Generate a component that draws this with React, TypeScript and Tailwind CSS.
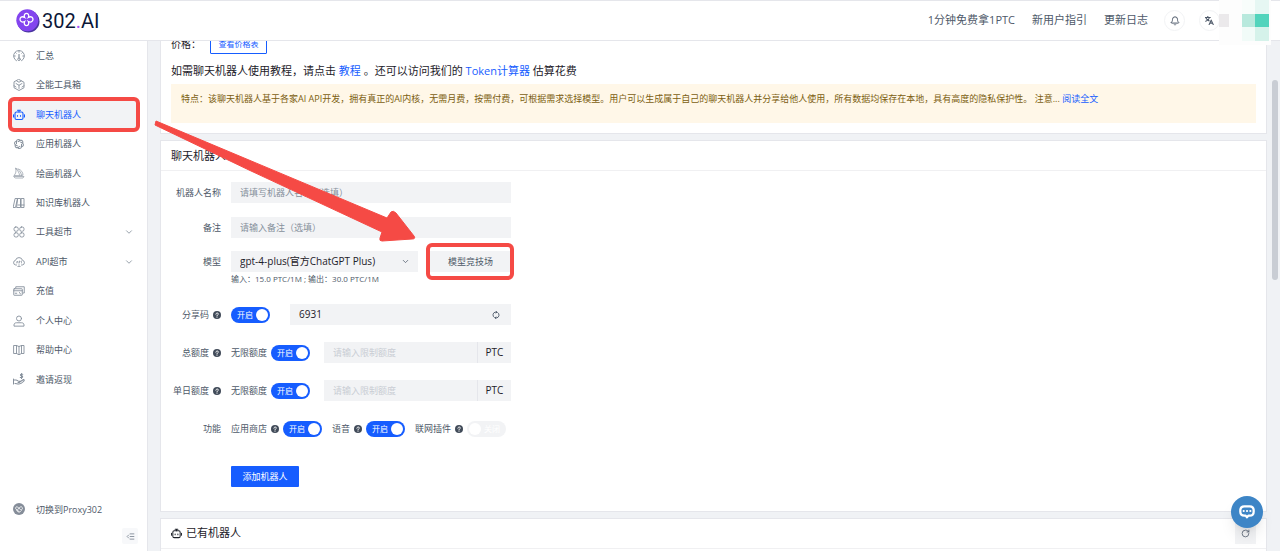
import React, { useState } from "react";
import {
  Bell,
  ChevronDown,
  ListIndentDecrease,
  RotateCw,
} from "lucide-react";
import { RiOpenaiLine } from "react-icons/ri";

type IconProps = { className?: string };

const Svg = ({
  className,
  children,
}: IconProps & { children: React.ReactNode }) => (
  <svg
    className={className}
    viewBox="0 0 24 24"
    fill="none"
    stroke="currentColor"
    strokeWidth="1.8"
    strokeLinecap="round"
    strokeLinejoin="round"
    aria-hidden="true"
  >
    {children}
  </svg>
);

const GaugeIcon = ({ className }: IconProps) => (
  <Svg className={className}>
    <path d="M7 21.500A10.800 10.800 0 1 1 17 21.500" />
    <path d="M12 1.500v3M2 12h2.500M19.500 12H22M5 5l1.500 1.500M19 5l-1.500 1.500" />
    <path d="M12 9v7" strokeWidth="2.500" />
    <circle cx="12" cy="18.500" r="2.600" />
  </Svg>
);

const CubeIcon = ({ className }: IconProps) => (
  <Svg className={className}>
    <path d="M12 1 22 6.500v11L12 23 2 17.500v-11Z" />
    <path d="M6 9l6 3.500L18 9M12 12.500V19M7.500 4l4.500 2.500L16.500 4M2 13.500 6 16M22 13.500 18 16" />
  </Svg>
);

const RobotIcon = ({ className }: IconProps) => (
  <Svg className={className}>
    <g strokeWidth="2.200">
      <rect x="4" y="6" width="16" height="15" rx="3" />
      <path d="M12 6V2.500M9 2.500h6M1 11.500v4.500M23 11.500v4.500" />
      <path d="M9 13v1.500M15 13v1.500" />
    </g>
  </Svg>
);

const SailIcon = ({ className }: IconProps) => (
  <Svg className={className}>
    <g strokeWidth="1.300">
      <path d="M2.500 16.500C6 13 7 8 5 2c7 3 11 8 12 14.500Z" />
      <path d="M11 4c6 2 9 7 9 12.500h-3M6.500 4c4 4 6 8 6.500 12M2 19h20l-2 3H5Z" />
    </g>
  </Svg>
);

const BooksIcon = ({ className }: IconProps) => (
  <Svg className={className}>
    <path d="M5 3h4L5 21H1ZM10 3h5v18H8ZM17 3h5v18h-5ZM10 16h5M17 16h5" />
  </Svg>
);

const CloverIcon = ({ className }: IconProps) => (
  <Svg className={className}>
    <rect x="2" y="2" width="8.500" height="8.500" rx="3.500" />
    <rect x="13.500" y="2" width="8.500" height="8.500" rx="3.500" />
    <rect x="2" y="13.500" width="8.500" height="8.500" rx="3.500" />
    <rect x="13.500" y="13.500" width="8.500" height="8.500" rx="3.500" />
  </Svg>
);

const CloudIcon = ({ className }: IconProps) => (
  <Svg className={className}>
    <path d="M7 18H5.500A4.700 4.700 0 0 1 5 8.700a7.200 7.200 0 0 1 14 0A4.700 4.700 0 0 1 18.500 18H17" />
    <path
      d="m7 14 1.500-4 1.500 4M12.500 14v-4h1.500v2h-1.500M17 10v4M12 17v4M9.500 21h5"
      strokeWidth="1.300"
    />
  </Svg>
);

const CardsIcon = ({ className }: IconProps) => (
  <Svg className={className}>
    <path d="M5.500 6V3.500h17V16H20" />
    <rect x="1.500" y="7.500" width="17" height="13" rx="1" />
    <path d="M1.500 11.500h17M4.500 16.500h3M13 15l2 3" />
  </Svg>
);

const UserIcon = ({ className }: IconProps) => (
  <Svg className={className}>
    <circle cx="12" cy="7" r="5" />
    <path d="M2 21.500V20c0-3 2-4.500 5-4.500h10c3 0 5 1.500 5 4.500v1.500Z" />
  </Svg>
);

const GuideIcon = ({ className }: IconProps) => (
  <Svg className={className}>
    <path d="M2 3h5l5 2 5-2h5v16h-5l-5 2.500L7 19H2ZM12 5v16M7 3v16M17 3v16" />
  </Svg>
);

const RebateIcon = ({ className }: IconProps) => (
  <Svg className={className}>
    <g strokeWidth="2.100">
      <path d="M1 12v10M1 14h5c3 0 3 2.500 6 2.500h3c0 2-2 2.500-5 2.500M15 17l6-4c2 1 2 2 0 4-3 3-5 5-9 5-4 0-5-1-8-1" />
      <path d="M19.500 2.500h-3c-2 0-2 3 0 3h1c2.500 0 2.500 3.500 0 3.500h-3M17 1v10" />
    </g>
  </Svg>
);

const ProxyIcon = ({ className }: IconProps) => (
  <svg className={className} viewBox="0 0 24 24" fill="none" aria-hidden="true">
    <circle cx="12" cy="12" r="12" fill="#858d99" />
    <path
      d="M12 17 6 12.500C3.500 9.500 7 6 9.500 8.500L15 13c2 2 5-1 3.500-4-1.500-2.500-4.500-1.500-5 0L9 13.500M7.500 15.500c3 3.500 6 3.500 9 0"
      stroke="#fff"
      strokeWidth="1.700"
      strokeLinecap="round"
    />
  </svg>
);

const HelpIcon = () => (
  <svg className="size-2 shrink-0" viewBox="0 0 24 24" aria-hidden="true">
    <circle cx="12" cy="12" r="12" fill="#414b59" />
    <path
      d="M8.500 9.500c0-4.500 7.500-4.500 7.500-.5 0 3-4 2.500-4 5.500M12 18.200v.600"
      fill="none"
      stroke="#fff"
      strokeWidth="3"
      strokeLinecap="round"
    />
  </svg>
);

const SyncIcon = ({ className }: IconProps) => (
  <Svg className={className}>
    <g strokeWidth="2.800">
      <path d="M7 19.500A9 9 0 0 1 9 3.500h5M17 4.500a9 9 0 0 1-2 16h-5" />
      <path d="m12 1 3 2.500L12 6M12 23l-3-2.500L12 18" />
    </g>
  </Svg>
);

const TranslateIcon = ({ className }: IconProps) => (
  <Svg className={className}>
    <path
      d="M1 4h13M7.500 1v3M12 4c-1 5-5 8-10 10M3 6c2 4 5 6 8 7M11 23l5.500-12L22 23M13 19h7"
      strokeWidth="3"
    />
  </Svg>
);

const LogoMark = () => (
  <svg className="size-6" viewBox="0 0 24 24" fill="none" aria-hidden="true">
    <circle cx="12.500" cy="12.500" r="11" fill="#4a35a0" />
    <circle cx="11.300" cy="11.200" r="11" fill="#8344ef" />
    <path
      d="M8.500 8.300C6.800 3 14.200 3 12.500 8.300 18.500 5.500 18.500 15 12.500 12.700 14.200 18 6.800 18 8.500 12.700 2.500 15 2.500 5.500 8.500 8.300Z"
      stroke="#fff"
      strokeWidth="1.300"
    />
    <path
      d="m8.500 8.300 1.200 1.200M12.500 8.300l-1.200 1.200M8.500 12.700l1.200-1.200M12.500 12.700l-1.200-1.200"
      stroke="#fff"
    />
  </svg>
);

const menu = [
  { label: "汇总", icon: GaugeIcon },
  { label: "全能工具箱", icon: CubeIcon },
  { label: "聊天机器人", icon: RobotIcon, active: true },
  { label: "应用机器人", icon: RiOpenaiLine },
  { label: "绘画机器人", icon: SailIcon },
  { label: "知识库机器人", icon: BooksIcon },
  { label: "工具超市", icon: CloverIcon, nested: true },
  { label: "API超市", icon: CloudIcon, nested: true },
  { label: "充值", icon: CardsIcon },
  { label: "个人中心", icon: UserIcon },
  { label: "帮助中心", icon: GuideIcon },
  { label: "邀请返现", icon: RebateIcon },
];

const Header = () => (
  <header className="relative flex h-[41px] shrink-0 items-center border-y border-[#e5e6eb] bg-white pl-4 pr-[60px]">
    <a href="#" className="flex items-center gap-[2px]">
      <LogoMark />
      <span className="font-[Roboto,sans-serif] text-[20px] leading-6 text-[#0c1738]">
        302<span className="text-[#a855f7]">.</span>AI
      </span>
    </a>
    <nav className="ml-auto flex items-center gap-[17px] text-[11px] text-[#4e5969]">
      <a href="#">1分钟免费拿1PTC</a>
      <a href="#">新用户指引</a>
      <a href="#">更新日志</a>
    </nav>
    <div className="ml-4 flex gap-[14px] text-[#4e5969]">
      <button
        aria-label="通知"
        className="flex size-[21px] items-center justify-center rounded-full border border-[#f2f3f5]"
      >
        <Bell className="size-[10px]" strokeWidth={2.4} />
      </button>
      <button
        aria-label="语言"
        className="flex size-[21px] items-center justify-center rounded-full border border-[#f2f3f5]"
      >
        <TranslateIcon className="size-[9px]" />
      </button>
    </div>
    <svg
      className="absolute -top-px right-[9px] z-10 h-[45px] w-[52px]"
      viewBox="0 0 52 45"
      shapeRendering="crispEdges"
      aria-hidden="true"
    >
      <path fill="#fdfdfd" d="M0 0h52v45H0z" />
      <path fill="#ebe9eb" d="M0 14h10v13H0z" />
      <path fill="#f8fdfb" d="M23 0h13v14H23z" />
      <path fill="#e6f7f3" d="M36 0h14v14H36z" />
      <path fill="#b8e9dd" d="M23 14h13v13H23z" />
      <path fill="#52d4bc" d="M36 14h14v13H36z" />
      <path fill="#f1fbf8" d="M23 27h13v14H23z" />
      <path fill="#d5f2ea" d="M36 27h14v14H36z" />
    </svg>
  </header>
);

const Sidebar = () => (
  <aside className="flex w-[148px] shrink-0 flex-col border-r border-[#e5e6eb] bg-white text-[9px] text-[#4e5969]">
    <nav className="flex h-[353px] flex-col">
      {menu.map(({ label, icon: Icon, active, nested }) => (
        <div key={label} className="relative flex flex-1 items-center">
          <a
            href="#"
            className={`mx-[9px] flex h-7 flex-1 items-center gap-[11px] px-1 ${
              active ? "bg-[#f2f3f5] text-[#165dff]" : ""
            }`}
          >
            <Icon className={`size-3 ${active ? "" : "text-[#86909c]"}`} />
            {label}
            {nested && (
              <ChevronDown className="ml-auto size-[10px] text-[#86909c]" />
            )}
          </a>
          {active && (
            <span className="pointer-events-none absolute -inset-y-[3px] left-2 right-[7px] rounded-md border-4 border-[#f54a45]" />
          )}
        </div>
      ))}
    </nav>
    <div className="mt-auto flex flex-col pb-[7px]">
      <a href="#" className="flex items-center gap-[11px] px-[13px]">
        <ProxyIcon className="size-3" />
        切换到Proxy302
      </a>
      <button
        aria-label="收起菜单"
        className="ml-auto mr-[9px] mt-3 flex size-4 items-center justify-center rounded-xs bg-[#f7f8fa] text-[#86909c]"
      >
        <ListIndentDecrease className="size-[9px]" strokeWidth={2.5} />
      </button>
    </div>
  </aside>
);

const Toggle = ({
  label,
  defaultOn = true,
}: {
  label: string;
  defaultOn?: boolean;
}) => {
  const [on, setOn] = useState(defaultOn);
  return (
    <label
      className={`relative flex h-4 w-[39px] shrink-0 items-center justify-between rounded-full text-[8px] text-white ${
        on
          ? "bg-[#165dff] pl-[6px] pr-[2px]"
          : "flex-row-reverse bg-[#f2f3f5] pl-[2px] pr-[6px]"
      }`}
    >
      <input
        type="checkbox"
        role="switch"
        aria-label={label}
        className="sr-only"
        checked={on}
        onChange={() => setOn(!on)}
      />
      <span>{on ? "开启" : "关闭"}</span>
      <span className="size-3 rounded-full bg-white" />
    </label>
  );
};

const Row = ({
  label,
  htmlFor,
  help,
  className = "",
  children,
}: {
  label: string;
  htmlFor?: string;
  help?: boolean;
  className?: string;
  children: React.ReactNode;
}) => (
  <div className={`flex h-[21px] items-center ${className}`}>
    <label
      htmlFor={htmlFor}
      className="flex w-[60px] shrink-0 items-center justify-end gap-1 whitespace-nowrap"
    >
      {label}
      {help && <HelpIcon />}
    </label>
    <div className="ml-[10px] flex w-[280px] items-center">{children}</div>
  </div>
);

const QuotaRow = ({ id, label }: { id: string; label: string }) => (
  <Row label={label} htmlFor={id} help className="mt-[17px]">
    <span className="w-[40px] whitespace-nowrap">无限额度</span>
    <Toggle label={`${label}无限额度`} />
    <div className="ml-auto flex h-[21px] w-[187px] bg-[#f2f3f5]">
      <input
        id={id}
        disabled
        placeholder="请输入限制额度"
        className="min-w-0 flex-1 px-[9px] text-[9px] placeholder:text-[#c9cdd4]"
      />
      <span className="flex w-[34px] items-center justify-center border-l border-[#e5e6eb] text-[10px] text-[#1d2129]">
        PTC
      </span>
    </div>
  </Row>
);

const inputClass =
  "h-[21px] w-full bg-[#f2f3f5] px-[9px] text-[9px] text-[#1d2129] placeholder:text-[#86909c]";

const BotForm = () => (
  <form
    className="pb-6 pr-[10px] pt-[11px] text-[9px] text-[#4e5969]"
    onSubmit={(e) => e.preventDefault()}
  >
    <Row label="机器人名称" htmlFor="name">
      <input
        id="name"
        className={inputClass}
        placeholder="请填写机器人名称（选填）"
      />
    </Row>
    <Row label="备注" htmlFor="remark" className="mt-[14px]">
      <input
        id="remark"
        className={inputClass}
        placeholder="请输入备注（选填）"
      />
    </Row>
    <Row label="模型" htmlFor="model" className="mt-[13px]">
      <div className="relative w-[187px]">
        <select
          id="model"
          className="h-[21px] w-full appearance-none bg-[#f2f3f5] pl-[9px] pr-5 text-[10px] text-[#1d2129]"
        >
          <option>gpt-4-plus(官方ChatGPT Plus)</option>
        </select>
        <ChevronDown className="pointer-events-none absolute right-2 top-[6px] size-[9px]" />
      </div>
      <div className="relative ml-auto">
        <button type="button" className="h-[21px] w-[81px] bg-[#f2f3f5]">
          模型竞技场
        </button>
        <span className="pointer-events-none absolute -inset-y-2 -left-1 -right-[3px] rounded-md border-4 border-[#f54a45]" />
      </div>
    </Row>
    <p className="ml-[70px] text-[8px] leading-[14px]">
      输入：15.0 PTC/1M ; 输出：30.0 PTC/1M
    </p>
    <Row label="分享码" htmlFor="code" help className="mt-[18px]">
      <Toggle label="分享码" />
      <div className="ml-auto flex h-[21px] w-[221px] items-center bg-[#f2f3f5] pr-[11px]">
        <input
          id="code"
          defaultValue="6931"
          className="min-w-0 flex-1 px-[9px] text-[10px] text-[#1d2129]"
        />
        <button type="button" aria-label="刷新分享码">
          <SyncIcon className="size-2" />
        </button>
      </div>
    </Row>
    <QuotaRow id="total" label="总额度" />
    <QuotaRow id="daily" label="单日额度" />
    <Row label="功能" className="mt-[17px]">
      <div className="flex items-center gap-[10px] whitespace-nowrap">
        <div className="flex items-center gap-1">
          应用商店 <HelpIcon /> <Toggle label="应用商店" />
        </div>
        <div className="flex items-center gap-1">
          语音 <HelpIcon /> <Toggle label="语音" />
        </div>
        <div className="flex items-center gap-1">
          联网插件 <HelpIcon /> <Toggle label="联网插件" defaultOn={false} />
        </div>
      </div>
    </Row>
    <button className="ml-[70px] mt-[27px] h-[21px] w-[68px] rounded-[1px] bg-[#165dff] text-white">
      添加机器人
    </button>
  </form>
);

const Card = ({
  className = "",
  children,
}: {
  className?: string;
  children: React.ReactNode;
}) => (
  <section className={`border border-[#e5e6eb] bg-white ${className}`}>
    {children}
  </section>
);

const App = () => {
  return (
    <div className="relative flex h-screen flex-col overflow-hidden bg-white font-['Open_Sans','Noto_Sans_CJK_SC',sans-serif]">
      <Header />
      <div className="flex min-h-0 flex-1">
        <Sidebar />
        <main className="flex min-w-0 flex-1 flex-col gap-[6px] overflow-hidden bg-[#f0f2f5] pl-3 pr-[13px]">
          <Card className="-mt-2 shrink-0 px-[10px] pb-[10px] text-[11px] text-[#1d2129]">
            <div className="flex h-5 items-center text-[10px] leading-3">
              <span className="w-[39px]">价格：</span>
              <button className="h-[19px] w-[57px] rounded-[1px] border border-[#165dff] text-[8px] leading-[10px] text-[#165dff]">
                查看价格表
              </button>
            </div>
            <p className="mt-[7px] leading-5">
              如需聊天机器人使用教程，请点击{" "}
              <a href="#" className="text-[#165dff]">
                教程
              </a>{" "}
              。还可以访问我们的{" "}
              <a href="#" className="text-[#165dff]">
                Token计算器
              </a>{" "}
              估算花费
            </p>
            <div className="mt-[3px] h-[39px] bg-[#fff7e8] px-[10px] pt-[7px] text-[9px] leading-4 text-[#7c5e10]">
              特点：该聊天机器人基于各家AI API开发，拥有真正的AI内核，无需月费，按需付费，可根据需求选择模型。用户可以生成属于自己的聊天机器人并分享给他人使用，所有数据均保存在本地，具有高度的隐私保护性。 注意...{" "}
              <a href="#" className="text-[#165dff]">
                阅读全文
              </a>
            </div>
          </Card>
          <Card className="shrink-0">
            <h2 className="border-b border-[#f0f0f2] px-[10px] text-[11px] leading-[29px] text-[#1d2129]">
              聊天机器人
            </h2>
            <BotForm />
          </Card>
          <Card className="shrink-0">
            <div className="flex h-[30px] items-center gap-1 border-b border-[#f0f0f2] px-[10px] text-[11px] text-[#1d2129]">
              <RobotIcon className="size-[11px]" />
              <h2>已有机器人</h2>
              <button
                aria-label="刷新"
                className="ml-auto flex size-[21px] items-center justify-center bg-[#f2f3f5] text-[#4e5969]"
              >
                <RotateCw className="size-[9px]" />
              </button>
            </div>
            <div className="h-20" />
          </Card>
        </main>
      </div>

      <span className="absolute right-[2px] top-20 h-[200px] w-[6px] rounded-full bg-[#c9cdd4]" />

      <button
        aria-label="在线客服"
        className="absolute bottom-[23px] right-[17px] flex size-8 items-center justify-center rounded-full bg-[#3d85c6] shadow-lg"
      >
        <svg className="size-4" viewBox="0 0 24 24" fill="none" aria-hidden="true">
          <path
            d="M8 3.500h8c4 0 6 2 6 6v2c0 4-2 6-6 6h-2L12 20l-2-2.500H8c-4 0-6-2-6-6v-2c0-4 2-6 6-6Z"
            stroke="#fff"
            strokeWidth="3.400"
            strokeLinejoin="round"
          />
          <path
            d="M7 10.500h.1M12 10.500h.1M17 10.500h.1"
            stroke="#fff"
            strokeWidth="3.200"
            strokeLinecap="round"
          />
        </svg>
      </button>

      <svg
        className="pointer-events-none absolute left-[150px] top-[116px] h-[130px] w-[270px]"
        viewBox="150 116 270 130"
        aria-hidden="true"
      >
        <path
          d="M156 121 387 218 391 212Q393 210 396 213L414 236Q416 239 412 239L382 241Q379 241 380 238L382 232 250 170.500 155 125Z"
          fill="#f54a45"
          stroke="#f54a45"
          strokeLinejoin="round"
        />
      </svg>
    </div>
  );
};

export default App;
